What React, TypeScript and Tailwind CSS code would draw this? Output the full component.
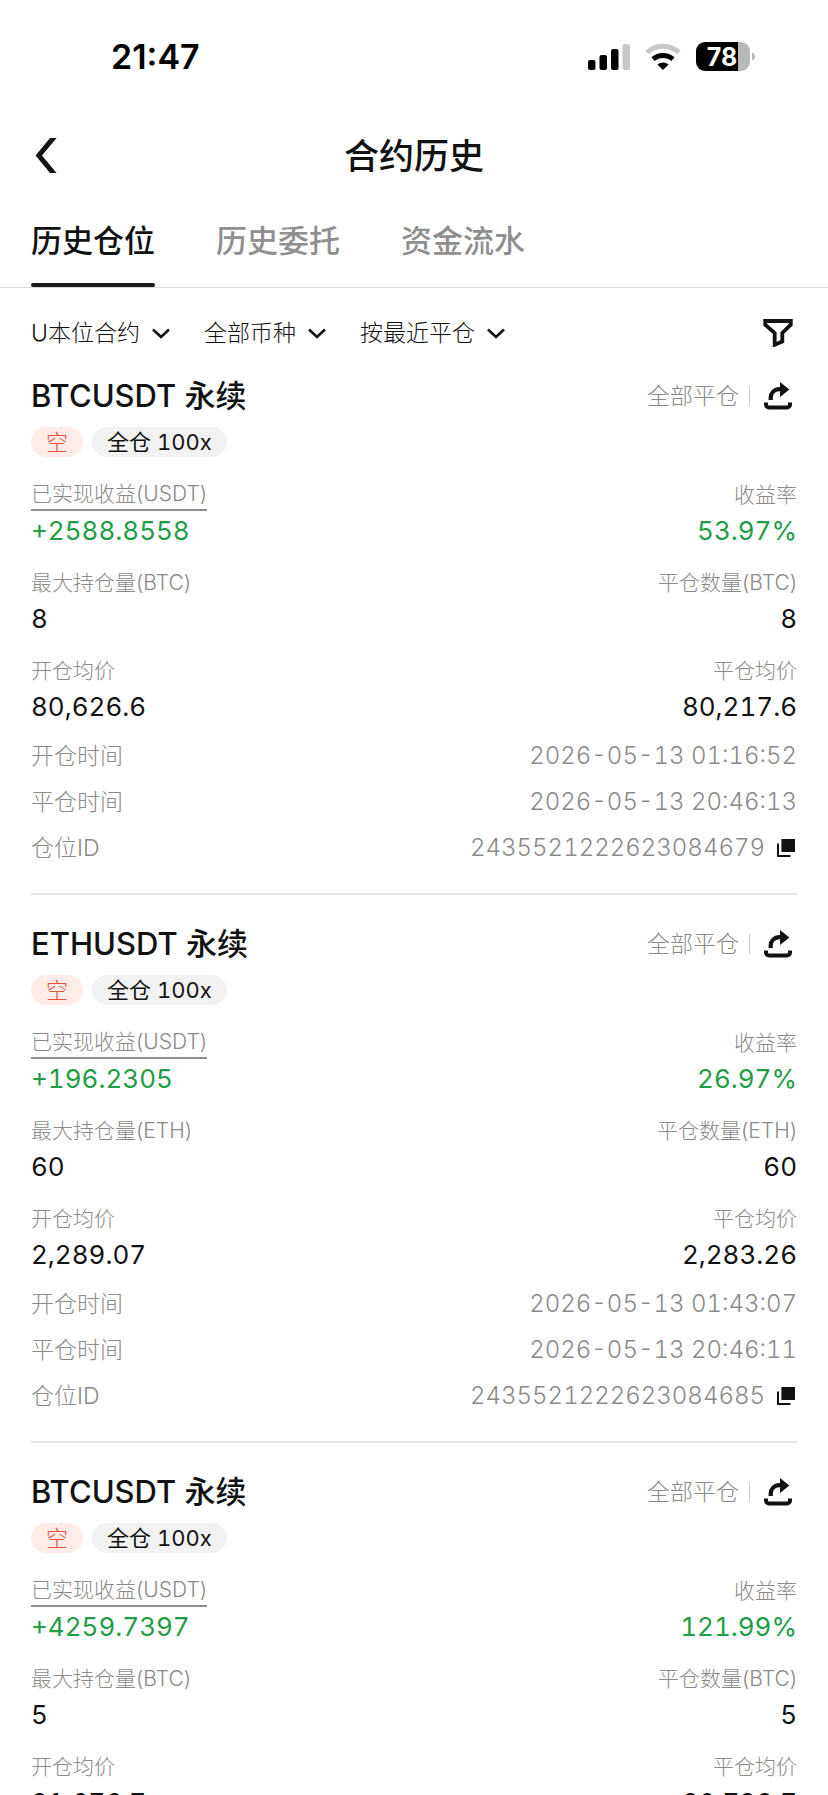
import { useState } from 'react';

type Position = {
  id: string;
  coin: string;
  pnl: string;
  rate: string;
  maxSize: string;
  closedSize: string;
  openPrice: string;
  closePrice: string;
  openedAt: string;
  closedAt: string;
};

const POSITIONS: Position[] = [
  {
    id: '2435521222623084679',
    coin: 'BTC',
    pnl: '+2588.8558',
    rate: '53.97%',
    maxSize: '8',
    closedSize: '8',
    openPrice: '80,626.6',
    closePrice: '80,217.6',
    openedAt: '2026-05-13 01:16:52',
    closedAt: '2026-05-13 20:46:13',
  },
  {
    id: '2435521222623084685',
    coin: 'ETH',
    pnl: '+196.2305',
    rate: '26.97%',
    maxSize: '60',
    closedSize: '60',
    openPrice: '2,289.07',
    closePrice: '2,283.26',
    openedAt: '2026-05-13 01:43:07',
    closedAt: '2026-05-13 20:46:11',
  },
  {
    id: '2435521222623084691',
    coin: 'BTC',
    pnl: '+4259.7397',
    rate: '121.99%',
    maxSize: '5',
    closedSize: '5',
    openPrice: '81,676.7',
    closePrice: '80,738.7',
    openedAt: '2026-05-12 22:08:31',
    closedAt: '2026-05-13 20:46:09',
  },
];

const TABS = ['历史仓位', '历史委托', '资金流水'];

const FILTERS = [
  { label: '合约类型', options: ['U本位合约'] },
  { label: '币种', options: ['全部币种'] },
  { label: '排序', options: ['按最近平仓'] },
];

function StatusBar() {
  return (
    <div className="flex h-[113px] shrink-0 items-center justify-between pl-[111px] pr-[72px] text-black">
      <span className="text-[34px] font-semibold leading-10">21:47</span>
      <div className="flex items-center gap-[15px]">
        <svg className="h-[26px] w-[42px]" viewBox="0 0 42 26" fill="currentColor">
          <rect x="0" y="16" width="7.5" height="10" rx="2" />
          <rect x="11.5" y="11" width="7.5" height="15" rx="2" />
          <rect x="23" y="5" width="7.5" height="21" rx="2" />
          <rect x="34.5" y="0" width="7.5" height="26" rx="2" fill="#c8c8c8" />
        </svg>
        <svg className="h-[26px] w-9" viewBox="0 0 36 26">
          <path d="M2 8.5a23.5 23.5 0 0 1 32 0" fill="none" stroke="#c8c8c8" strokeWidth="5" />
          <path d="M8 15.2a15 15 0 0 1 20 0" fill="none" stroke="#000" strokeWidth="5" />
          <path d="M18 26l-5.6-5.4a8.4 8.4 0 0 1 11.2 0z" fill="#000" />
        </svg>
        <svg className="h-[29px] w-[60px]" viewBox="0 0 60 29">
          <path d="M9 0h33v29H9a9 9 0 0 1-9-9V9a9 9 0 0 1 9-9z" fill="#000" />
          <path d="M42 0h3a9 9 0 0 1 9 9v11a9 9 0 0 1-9 9h-3z" fill="#b9b9b9" />
          <path d="M56 10.5a4.2 4.2 0 0 1 0 8z" fill="#b9b9b9" />
          <text x="26" y="24" textAnchor="middle" fill="#fff" fontSize="25" fontWeight="700">
            78
          </text>
        </svg>
      </div>
    </div>
  );
}

function ChevronDown() {
  return (
    <svg className="pointer-events-none h-[11px] w-[18px]" viewBox="0 0 18 11" fill="none">
      <path d="M1 1.5l8 7.5 8-7.5" stroke="currentColor" strokeWidth="2.6" />
    </svg>
  );
}

function ShareIcon() {
  return (
    <svg className="h-7 w-7" viewBox="0 0 28 28" fill="none">
      <path d="M6.7 18v-2.5a8.3 8.3 0 0 1 8.3-8.3h2.5" stroke="currentColor" strokeWidth="4.2" />
      <path d="M16 0l9.4 7.5L16 15z" fill="currentColor" />
      <path d="M2 20.5v2a3 3 0 0 0 3 3h18a3 3 0 0 0 3-3v-2" stroke="currentColor" strokeWidth="4" />
    </svg>
  );
}

function CopyIcon() {
  return (
    <svg className="h-[18px] w-[18px]" viewBox="0 0 18 18">
      <path d="M4.4 0H18v13H4.4z" fill="currentColor" />
      <path d="M1 4.5V17h12.5" fill="none" stroke="currentColor" strokeWidth="2" />
    </svg>
  );
}

function Metric({ label, value, green = false, underline = false, right = false }: any) {
  return (
    <div className={right ? 'flex flex-col items-end' : 'flex flex-col items-start'}>
      <dt
        className={
          underline
            ? 'h-8 border-b-2 border-[#8f8f8f] text-[21px] font-light leading-[30px] text-[#8a8a8a]'
            : 'h-8 text-[21px] font-light leading-8 text-[#8a8a8a]'
        }
      >
        {label}
      </dt>
      <dd
        className={
          green
            ? 'text-[26px] leading-10 tabular-nums text-[#1f9d45]'
            : 'text-[26px] leading-10 tabular-nums text-[#121212]'
        }
      >
        {value}
      </dd>
    </div>
  );
}

function PositionCard({ position }: { position: Position }) {
  const { coin } = position;

  return (
    <article className="mx-[31px] border-b-2 border-[#e6e6e6] pb-[22px] pt-[27px]">
      <div className="flex h-11 items-center justify-between">
        <h2 className="text-[31px] font-medium leading-[44px]">{coin}USDT 永续</h2>
        <div className="flex items-center pr-[5px]">
          <span className="text-[23px] font-light text-[#8a8a8a]">全部平仓</span>
          <span className="ml-[10px] h-5 w-px bg-[#cfcfcf]" />
          <button type="button" aria-label="分享" className="ml-[14px]">
            <ShareIcon />
          </button>
        </div>
      </div>

      <div className="mt-[9px] flex gap-[9px] text-[22px] leading-[30px]">
        <span className="rounded-full bg-[#ffece8] px-[15px] font-light text-[#e0513c]">空</span>
        <span className="rounded-full bg-[#f2f2f2] px-[15px] tabular-nums">全仓 100x</span>
      </div>

      <dl className="mt-[22px] flex flex-col gap-4">
        <div className="flex justify-between">
          <Metric label="已实现收益(USDT)" value={position.pnl} green underline />
          <Metric label="收益率" value={position.rate} green right />
        </div>
        <div className="flex justify-between">
          <Metric label={`最大持仓量(${coin})`} value={position.maxSize} />
          <Metric label={`平仓数量(${coin})`} value={position.closedSize} right />
        </div>
        <div className="flex justify-between">
          <Metric label="开仓均价" value={position.openPrice} />
          <Metric label="平仓均价" value={position.closePrice} right />
        </div>
      </dl>

      <dl className="mt-[6px] text-[23px] font-light leading-[46px] text-[#8a8a8a]">
        <div className="flex justify-between">
          <dt>开仓时间</dt>
          <dd className="text-[24px] leading-[46px] tabular-nums">{position.openedAt}</dd>
        </div>
        <div className="flex justify-between">
          <dt>平仓时间</dt>
          <dd className="text-[24px] leading-[46px] tabular-nums">{position.closedAt}</dd>
        </div>
        <div className="flex justify-between">
          <dt>仓位ID</dt>
          <dd className="flex items-center gap-3 pr-[2px] text-[24px] leading-[46px] tabular-nums">
            {position.id}
            <button type="button" aria-label="复制" className="text-[#121212]">
              <CopyIcon />
            </button>
          </dd>
        </div>
      </dl>
    </article>
  );
}

export default function App() {
  const [tab, setTab] = useState(TABS[0]);

  return (
    <div className="flex h-dvh flex-col bg-white font-['Inter','Noto_Sans_CJK_SC',sans-serif] text-[#121212]">
      <StatusBar />

      <header className="grid h-[85px] shrink-0 grid-cols-[1fr_auto_1fr] items-center px-[35px]">
        <button type="button" aria-label="返回" className="justify-self-start">
          <svg className="h-[35px] w-[22px]" viewBox="0 0 22 35" fill="currentColor">
            <path d="M15 0h6.6L7 17.5 21.6 35H15L.6 17.5z" />
          </svg>
        </button>
        <h1 className="text-[35px] font-medium leading-[48px]">合约历史</h1>
      </header>

      <nav className="flex h-[90px] shrink-0 gap-[61px] border-b border-[#dcdcdc] px-[31px]">
        {TABS.map((name) => (
          <button
            key={name}
            type="button"
            onClick={() => setTab(name)}
            className={
              tab === name
                ? 'flex flex-col justify-between text-[31px] font-medium'
                : 'flex flex-col justify-between text-[31px] font-medium text-[#8f8f8f]'
            }
          >
            <span className="leading-[85px]">{name}</span>
            {tab === name && <span className="h-1 w-full rounded-full bg-[#1c1c1c]" />}
          </button>
        ))}
      </nav>

      <main className="min-h-0 flex-1 overflow-y-auto [scrollbar-width:none]">
        <div className="flex items-center justify-between px-[31px] pt-[31px]">
          <div className="flex gap-[34px]">
            {FILTERS.map((filter) => (
              <label key={filter.label} className="flex items-center gap-3">
                <select
                  aria-label={filter.label}
                  className="h-7 appearance-none bg-transparent text-[23px] leading-7 font-light [field-sizing:content]"
                >
                  {filter.options.map((option) => (
                    <option key={option}>{option}</option>
                  ))}
                </select>
                <ChevronDown />
              </label>
            ))}
          </div>
          <button type="button" aria-label="筛选" className="pr-1">
            <svg className="h-7 w-[30px]" viewBox="0 0 30 28" fill="none">
              <path d="M2.2 2h25.6v3.6L19.3 14v8.6l-7.6 3.2V14L2.2 5.6z" stroke="currentColor" strokeWidth="3.8" />
            </svg>
          </button>
        </div>

        {POSITIONS.map((position) => (
          <PositionCard key={position.id} position={position} />
        ))}
      </main>
    </div>
  );
}
